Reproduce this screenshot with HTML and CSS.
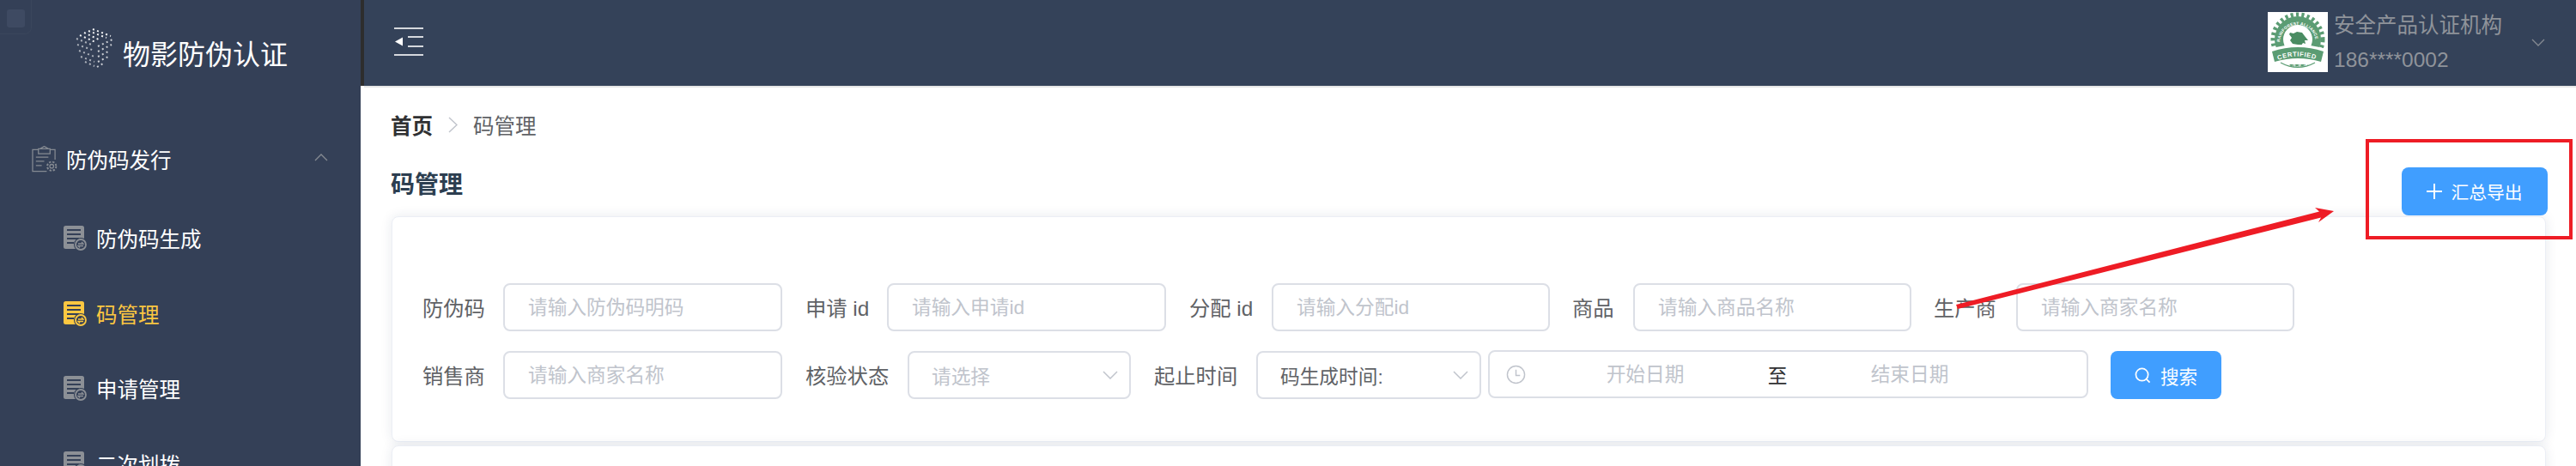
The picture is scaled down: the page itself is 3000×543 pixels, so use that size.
FILE: index.html
```html
<!DOCTYPE html>
<html lang="zh-CN">
<head>
    <meta charset="UTF-8">
    <title>码管理</title>
    <link rel="stylesheet" href="styles.css">
</head>
<body>
    <svg class="sprite" width="0" height="0">
        <symbol id="doc" viewBox="0 0 27 29">
            <rect width="24" height="27" rx="2.500" fill="currentColor"/>
            <path stroke="#344057" stroke-width="1.800" d="M4 5h16M4 10h16M4 15h14M4 20h8"/>
            <circle cx="20" cy="22" r="8" fill="#344057"/>
            <circle cx="20" cy="22" r="6" fill="none" stroke="currentColor" stroke-width="1.800"/>
            <path fill="none" stroke="currentColor" stroke-width="1.300" d="M17 21h6l-2-2M23 23.500h-6l2 2"/>
        </symbol>
    </svg>

    <div class="corner"><span></span></div>

    <aside class="sidebar">
        <div class="logo">
            <svg class="cube" viewBox="0 0 44 48" width="44" height="48" fill="none" stroke="#fff" stroke-width="2" stroke-dasharray="2 3.400">
                <path opacity=".95" d="M20 1l21 8M15 3l21 8M10 5l19 9M5 8l18 8"/>
                <path opacity=".6" d="M1 12l20 8M2 19l20 7M4 26l18 7M6 33l16 6M11 39l11 5"/>
                <path opacity=".75" d="M26 21l17-8M26 27l16-8M26 33l14-7M26 39l12-6M25 45l9-5"/>
            </svg>
            <span>物影防伪认证</span>
        </div>
        <nav>
            <div class="nav-group">
                <svg class="nav-group-icon" viewBox="0 0 31 31" width="30" height="31" fill="none" stroke="#858a92" stroke-width="1.300">
                    <path d="M8 4H1v26h17M22 4h6v12M8 3h14v6H8zM10 3l5-3 5 3M5 13h15M5 18h10M5 23h7"/>
                    <circle cx="24" cy="24" r="2.300"/>
                    <circle cx="24" cy="24" r="5.300" stroke-width="2" stroke-dasharray="2.500 1.700"/>
                </svg>
                <span>防伪码发行</span>
                <svg class="nav-arrow" viewBox="0 0 16 9" width="16" height="9" fill="none" stroke="#858a92" stroke-width="1.300"><path d="M1 8l7-7 7 7"/></svg>
            </div>
            <a class="nav-item"><svg width="27" height="29"><use href="#doc"/></svg>防伪码生成</a>
            <a class="nav-item active"><svg width="27" height="29"><use href="#doc"/></svg>码管理</a>
            <a class="nav-item"><svg width="27" height="29"><use href="#doc"/></svg>申请管理</a>
            <a class="nav-item"><svg width="27" height="29"><use href="#doc"/></svg>二次划拨</a>
        </nav>
    </aside>

    <div class="main">
        <header class="topbar">
            <svg class="collapse" viewBox="0 0 34 34" width="34" height="34" fill="none" stroke="#d5d8dd" stroke-width="2">
                <path d="M0 1h34M16 11h18M16 22h18M0 32h34"/>
                <path fill="#fff" stroke="none" d="M1 16.500l9-5v10z"/>
            </svg>
            <div class="user">
                <svg class="seal" viewBox="0 0 70 70" width="70" height="70">
                    <defs>
                        <path id="seal-arc" d="M14 36a21 21 0 0 1 42 0"/>
                        <path id="seal-band" d="M12 56q23-9 46 0"/>
                    </defs>
                    <rect width="70" height="70" fill="#fff"/>
                    <circle cx="35" cy="32" r="27" fill="#5b9c73"/>
                    <circle cx="35" cy="32" r="29" fill="none" stroke="#5b9c73" stroke-width="5" stroke-dasharray="3.200 3.200"/>
                    <circle cx="35" cy="32" r="17" fill="#fff"/>
                    <text class="seal-small"><textPath href="#seal-arc" startOffset="1">RAINFOREST ALLIANCE</textPath></text>
                    <path fill="#4a8c62" d="M26 24l4 1 4-2 6 1 3 4 4 5-4 0 1 4-3-1-2 3 3 2h-6l-1-3-6-1-3-4 2-3-3-4z"/>
                    <path fill="#fff" d="M3 43q32-10 64 0l-3 18H6z"/>
                    <path fill="#5b9c73" d="M5 46q30-10 60 0l-3 12q-27-8-54 0z"/>
                    <path fill="none" stroke="#5b9c73" stroke-width="1.200" d="M15 59q20 11 40 0"/>
                    <text class="seal-ribbon"><textPath href="#seal-band">CERTIFIED</textPath></text>
                    <text class="seal-est" x="35" y="63.500" text-anchor="middle">EST 1987</text>
                </svg>
                <div class="user-info">
                    <div>安全产品认证机构</div>
                    <div>186****0002</div>
                </div>
                <svg class="user-arrow" viewBox="0 0 16 9" width="16" height="9" fill="none" stroke="#858a92" stroke-width="1.300"><path d="M1 1l7 7 7-7"/></svg>
            </div>
        </header>

        <div class="content">
            <div class="breadcrumb">
                <strong>首页</strong>
                <svg viewBox="0 0 11 19" width="11" height="19" fill="none" stroke="#c0c4cc" stroke-width="1.500"><path d="M1 1l9 8.500-9 8.500"/></svg>
                <span>码管理</span>
            </div>
            <div class="title-row">
                <h2>码管理</h2>
                <button class="btn btn-export">
                    <svg viewBox="0 0 18 18" width="18" height="18" stroke="#fff" stroke-width="2"><path d="M9 0v18M0 9h18"/></svg>
                    汇总导出
                </button>
            </div>

            <div class="card filter-card">
                <div class="form-row">
                    <div class="form-item"><label class="l-94">防伪码</label><input class="w-325" placeholder="请输入防伪码明码"></div>
                    <div class="form-item"><label class="l-95">申请 id</label><input class="w-325" placeholder="请输入申请id"></div>
                    <div class="form-item"><label class="l-96">分配 id</label><input class="w-324" placeholder="请输入分配id"></div>
                    <div class="form-item"><label class="l-71">商品</label><input class="w-324" placeholder="请输入商品名称"></div>
                    <div class="form-item"><label class="l-96">生产商</label><input class="w-324" placeholder="请输入商家名称"></div>
                </div>
                <div class="form-row">
                    <div class="form-item"><label class="l-94">销售商</label><input class="w-325" placeholder="请输入商家名称"></div>
                    <div class="form-item">
                        <label class="l-119">核验状态</label>
                        <div class="select w-260">
                            <span class="placeholder">请选择</span>
                            <svg viewBox="0 0 18 10" width="18" height="10" fill="none" stroke="#c0c4cc" stroke-width="1.500"><path d="M1 1l8 8 8-8"/></svg>
                        </div>
                    </div>
                    <div class="form-item form-item-tight">
                        <label class="l-119">起止时间</label>
                        <div class="select w-262">
                            <span>码生成时间:</span>
                            <svg viewBox="0 0 18 10" width="18" height="10" fill="none" stroke="#c0c4cc" stroke-width="1.500"><path d="M1 1l8 8 8-8"/></svg>
                        </div>
                    </div>
                    <div class="date-range">
                        <svg viewBox="0 0 24 24" width="23" height="23" fill="none" stroke="#c0c4cc" stroke-width="1.500"><circle cx="12" cy="12" r="10.500"/><path d="M12 6v7h5"/></svg>
                        <input placeholder="开始日期">
                        <span class="range-sep">至</span>
                        <input placeholder="结束日期">
                    </div>
                    <button class="btn btn-search">
                        <svg viewBox="0 0 20 20" width="19" height="19" fill="none" stroke="#fff" stroke-width="1.800"><circle cx="9" cy="9" r="7.500"/><path d="M14.500 14.500l4 4"/></svg>
                        搜索
                    </button>
                </div>
            </div>
            <div class="card list-card"></div>
        </div>
    </div>

    <!-- annotation drawn on top of the screenshot -->
    <svg class="annotation" viewBox="0 0 3000 543" width="3000" height="543">
        <rect class="annotation-box" x="2757" y="164" width="237" height="113"/>
        <path class="annotation-arrow" d="M2278 355L2701 246.500L2696 242L2718 246L2700 259L2703 253.500L2280 360Z"/>
    </svg>
</body>
</html>
```

FILE: styles.css
```css
* {
    margin: 0;
    padding: 0;
    box-sizing: border-box;
}

body {
    display: flex;
    width: 3000px;
    height: 543px;
    overflow: hidden;
    background: #fff;
    font-family: "Liberation Sans", "Noto Sans CJK SC", sans-serif;
    color: #606266;
}

.sprite {
    display: none;
}

.corner {
    position: absolute;
    left: -10px;
    top: -10px;
    width: 47px;
    height: 50px;
    padding: 20px 0 0 17px;
    border: 1px solid #3a465c;
    border-radius: 8px;
}

.corner span {
    display: block;
    width: 21px;
    height: 21px;
    border-radius: 3px;
    background: #3e4a62;
}

/* sidebar */
.sidebar {
    width: 420px;
    flex-shrink: 0;
    overflow: hidden;
    background: #344057;
}

.logo {
    display: flex;
    align-items: flex-start;
    height: 140px;
    padding: 33px 0 0 88px;
    color: #fff;
    font-size: 32px;
}

.logo span {
    margin: 8px 0 0 11px;
    line-height: 46px;
}

.nav-group {
    display: flex;
    align-items: center;
    height: 90px;
    padding: 0 38px 0 37px;
    color: #fff;
    font-size: 24.500px;
}

.nav-group span {
    margin-left: 10px;
    flex: 1;
}

.nav-arrow {
    margin-bottom: 4px;
}

.nav-item {
    display: flex;
    align-items: center;
    gap: 11px;
    height: 87.500px;
    padding-left: 74px;
    color: #fff;
    font-size: 24.500px;
}

.nav-group + .nav-item {
    margin-top: 4px;
}

.nav-item svg {
    color: #8c9096;
}

.nav-item.active,
.nav-item.active svg {
    color: #fcc741;
}

/* top bar */
.main {
    flex: 1;
    min-width: 0;
}

.topbar {
    display: flex;
    align-items: center;
    justify-content: space-between;
    position: relative;
    height: 102px;
    margin-left: 4px;
    padding: 0 36px 2px 35px;
    background: #344259;
    border-bottom: 2px solid #e6e6e6;
}

.topbar::before {
    content: "";
    position: absolute;
    left: -4px;
    top: 0;
    width: 4px;
    height: 100px;
    background: #2d2d2d;
}

.user {
    display: flex;
    align-items: center;
    color: #8f939a;
    font-size: 24.500px;
}

.seal-small {
    font: bold 4.800px "Liberation Sans", sans-serif;
    fill: #fff;
    letter-spacing: .2px;
}

.seal-ribbon {
    font: bold 7.500px "Liberation Sans", sans-serif;
    fill: #fff;
    letter-spacing: .6px;
}

.seal-est {
    font: bold 4px "Liberation Sans", sans-serif;
    fill: #5b9c73;
}

.user-info {
    margin: 2px 0 0 7px;
    line-height: 40px;
}

.user-arrow {
    margin-left: 34px;
}

/* content */
.content {
    padding: 28px 33px 0 35px;
}

.breadcrumb {
    display: flex;
    align-items: center;
    height: 30px;
    font-size: 24.500px;
}

.breadcrumb strong {
    color: #303133;
}

.breadcrumb svg {
    margin: 0 18px;
}

.title-row {
    display: flex;
    justify-content: space-between;
    height: 56px;
    margin-top: 35px;
}

.title-row h2 {
    font-size: 28px;
    line-height: 42px;
    color: #2c3e50;
}

.btn {
    display: flex;
    align-items: center;
    justify-content: center;
    border: none;
    border-radius: 8px;
    background: #409eff;
    color: #fff;
    font-family: inherit;
}

.btn-export {
    gap: 10px;
    width: 170px;
    height: 56px;
    font-size: 20.800px;
}

.card {
    width: 2509px;
    margin-left: 1px;
    background: #fff;
    border: 1px solid #ebeef5;
    border-radius: 8px;
    box-shadow: 0 0 14px rgba(30, 50, 90, .1);
}

.filter-card {
    height: 263px;
    margin-top: 1px;
    padding: 77px 0 0 35px;
}

.list-card {
    height: 200px;
    margin-top: 4px;
}

.form-row {
    display: flex;
    align-items: center;
    margin-bottom: 23px;
}

.form-item {
    display: flex;
    align-items: center;
    margin-right: 27px;
}

.form-item:nth-child(n+3) {
    margin-right: 26px;
}

.form-row .form-item-tight {
    margin-right: 8px;
}

.form-item label {
    margin-bottom: 1px;
    font-size: 24.300px;
    white-space: nowrap;
}

.l-71 { width: 71px; }
.l-94 { width: 94px; }
.l-95 { width: 95px; }
.l-96 { width: 96px; }
.l-119 { width: 119px; }

input,
.select {
    height: 56px;
    padding-left: 27px;
    border: 2px solid #dcdfe6;
    border-radius: 8px;
    background: #fff;
    font-family: inherit;
    font-size: 22.700px;
    color: #606266;
    outline: none;
}

input::placeholder,
.placeholder {
    color: #c0c4cc;
}

.w-325 { width: 325px; }
.w-324 { width: 324px; }
.w-260 { width: 260px; }
.w-262 { width: 262px; }

.select {
    display: flex;
    align-items: center;
    justify-content: space-between;
    padding: 0 13px 0 26px;
}

.date-range {
    display: flex;
    align-items: center;
    width: 699px;
    height: 56px;
    margin: -2px 26px 0 0;
    padding-left: 19px;
    border: 2px solid #dcdfe6;
    border-radius: 8px;
}

.date-range svg {
    margin-right: 4px;
}

.date-range input {
    width: 270px;
    height: 50px;
    padding: 0;
    border: none;
    text-align: center;
}

.range-sep {
    width: 38px;
    text-align: center;
    font-size: 22.700px;
    color: #303133;
}

.btn-search {
    gap: 11px;
    width: 129px;
    height: 56px;
    font-size: 21.600px;
}

/* annotation */
.annotation {
    position: absolute;
    left: 0;
    top: 0;
    pointer-events: none;
}

.annotation-box {
    fill: none;
    stroke: #ee1c25;
    stroke-width: 4;
}

.annotation-arrow {
    fill: #ee1c25;
}
```
